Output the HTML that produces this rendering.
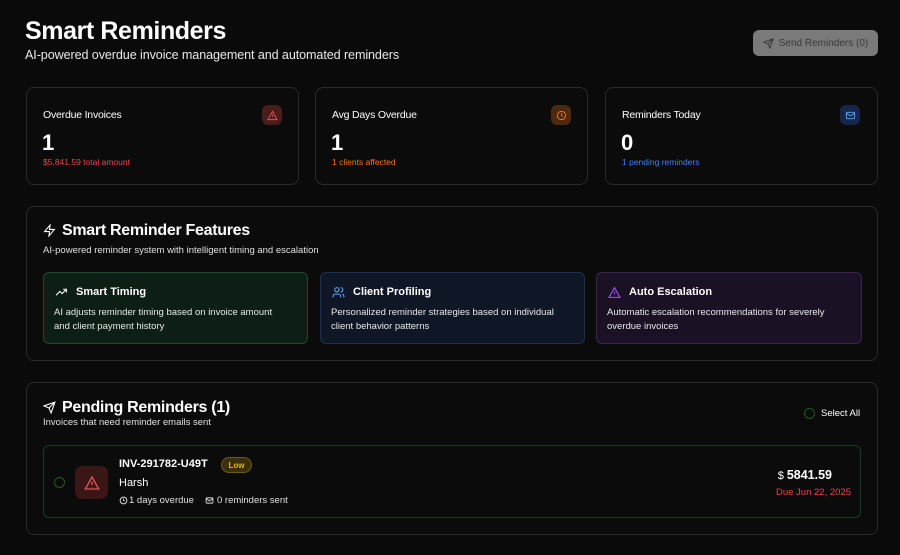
<!DOCTYPE html>
<html><head><meta charset="utf-8"><style>
*{box-sizing:border-box;margin:0;padding:0}
body{width:900px;height:555px;background:#0a0a0a;color:#fff;font-family:"Liberation Sans",sans-serif;position:relative;overflow:hidden}
.a{position:absolute}
.card{position:absolute;border:1px solid #2a2a2a;border-radius:8px;background:#0b0b0b}
.t{font-size:10.5px;letter-spacing:-0.2px}
svg{display:block}
</style></head><body>
<div class="a" style="left:25px;top:17px;font-size:25px;font-weight:bold;letter-spacing:-0.4px">Smart Reminders</div>
<div class="a" style="left:25px;top:48px;font-size:12.6px;color:#e8e8e8;letter-spacing:-0.1px">AI-powered overdue invoice management and automated reminders</div>
<div class="a" style="left:753px;top:30px;width:125px;height:26px;background:#7a7a7a;border-radius:6px;color:#3a3a3a;font-size:10px;display:flex;align-items:center;justify-content:center;gap:5px">
<svg width="11" height="11" viewBox="0 0 24 24" fill="none" stroke="#333" stroke-width="2"><path d="M22 2L11 13M22 2l-7 20-4-9-9-4z"/></svg>Send Reminders (0)</div>

<div class="card" style="left:26px;top:87px;width:273px;height:98px">
<div class="a t" style="left:16px;top:21px">Overdue Invoices</div>
<div class="a" style="left:235px;top:17px;width:20px;height:20px;border-radius:6px;background:#4a1c1c;display:flex;align-items:center;justify-content:center"><svg width="11" height="11" viewBox="0 0 24 24" fill="none" stroke="#e05555" stroke-width="2"><path d="M12 3L2 21h20z M12 10v5 M12 18v.5"/></svg></div>
<div class="a" style="left:15px;top:42px;font-size:22px;font-weight:bold">1</div>
<div class="a" style="left:16px;top:69px;font-size:8.5px;color:#ef4444">$5,841.59 total amount</div></div>

<div class="card" style="left:315px;top:87px;width:273px;height:98px">
<div class="a t" style="left:16px;top:21px">Avg Days Overdue</div>
<div class="a" style="left:235px;top:17px;width:20px;height:20px;border-radius:6px;background:#4a2a10;display:flex;align-items:center;justify-content:center"><svg width="11" height="11" viewBox="0 0 24 24" fill="none" stroke="#f97316" stroke-width="2"><circle cx="12" cy="12" r="9"/><path d="M12 7v5l3 2"/></svg></div>
<div class="a" style="left:15px;top:42px;font-size:22px;font-weight:bold">1</div>
<div class="a" style="left:16px;top:69px;font-size:8.5px;color:#f97316">1 clients affected</div></div>

<div class="card" style="left:605px;top:87px;width:273px;height:98px">
<div class="a t" style="left:16px;top:21px">Reminders Today</div>
<div class="a" style="left:234px;top:17px;width:20px;height:20px;border-radius:6px;background:#16264a;display:flex;align-items:center;justify-content:center"><svg width="11" height="11" viewBox="0 0 24 24" fill="none" stroke="#60a5fa" stroke-width="2"><rect x="3" y="5" width="18" height="14" rx="2"/><path d="M3 7l9 6 9-6"/></svg></div>
<div class="a" style="left:15px;top:42px;font-size:22px;font-weight:bold">0</div>
<div class="a" style="left:16px;top:69px;font-size:8.5px;color:#3b82f6">1 pending reminders</div></div>

<div class="card" style="left:26px;top:206px;width:852px;height:155px">
<svg class="a" style="left:16px;top:17px" width="13" height="13" viewBox="0 0 24 24" fill="none" stroke="#fff" stroke-width="2"><path d="M13 2L3 14h9l-1 8 10-12h-9z"/></svg>
<div class="a" style="left:35px;top:15px;font-size:16px;font-weight:bold;letter-spacing:-0.3px">Smart Reminder Features</div>
<div class="a" style="left:16px;top:38px;font-size:9.5px;color:#e0e0e0">AI-powered reminder system with intelligent timing and escalation</div>
<div class="a" style="left:16px;top:65px;width:265px;height:72px;border:1px solid #1d4a28;border-radius:6px;background:#0d1f14">
<svg class="a" style="left:11px;top:13px" width="13" height="13" viewBox="0 0 24 24" fill="none" stroke="#fff" stroke-width="2"><path d="M2 17l7-7 4 4 8-8M15 6h6v6"/></svg>
<div class="a" style="left:32px;top:13px;font-size:11px;font-weight:bold">Smart Timing</div>
<div class="a" style="left:10px;top:33px;font-size:9.5px;line-height:14px;color:#e8e8e8">AI adjusts reminder timing based on invoice amount<br>and client payment history</div></div>
<div class="a" style="left:293px;top:65px;width:265px;height:72px;border:1px solid #1e3050;border-radius:6px;background:#0f1726">
<svg class="a" style="left:11px;top:13px" width="13" height="13" viewBox="0 0 24 24" fill="none" stroke="#60a5fa" stroke-width="2"><circle cx="9" cy="7" r="4"/><path d="M2 21v-2a4 4 0 014-4h6a4 4 0 014 4v2M16 3a4 4 0 010 8M22 21v-2a4 4 0 00-3-4"/></svg>
<div class="a" style="left:32px;top:13px;font-size:11px;font-weight:bold">Client Profiling</div>
<div class="a" style="left:10px;top:33px;font-size:9.5px;line-height:14px;color:#e8e8e8">Personalized reminder strategies based on individual<br>client behavior patterns</div></div>
<div class="a" style="left:569px;top:65px;width:266px;height:72px;border:1px solid #3a2550;border-radius:6px;background:#1a1224">
<svg class="a" style="left:11px;top:13px" width="13" height="13" viewBox="0 0 24 24" fill="none" stroke="#a855f7" stroke-width="2"><path d="M12 3L2 21h20z M12 10v5 M12 18v.5"/></svg>
<div class="a" style="left:32px;top:13px;font-size:11px;font-weight:bold">Auto Escalation</div>
<div class="a" style="left:10px;top:33px;font-size:9.5px;line-height:14px;color:#e8e8e8">Automatic escalation recommendations for severely<br>overdue invoices</div></div>
</div>

<div class="card" style="left:26px;top:382px;width:852px;height:153px">
<svg class="a" style="left:16px;top:18px" width="13" height="13" viewBox="0 0 24 24" fill="none" stroke="#fff" stroke-width="2"><path d="M22 2L11 13M22 2l-7 20-4-9-9-4z"/></svg>
<div class="a" style="left:35px;top:16px;font-size:16px;font-weight:bold;letter-spacing:-0.3px">Pending Reminders (1)</div>
<div class="a" style="left:16px;top:34px;font-size:9.5px;color:#e0e0e0">Invoices that need reminder emails sent</div>
<div class="a" style="left:777px;top:25px;width:11px;height:11px;border:1px solid #1d5a2c;border-radius:50%"></div>
<div class="a" style="left:794px;top:25px;font-size:9.5px">Select All</div>
<div class="a" style="left:16px;top:62px;width:818px;height:73px;border:1px solid #1a3d22;border-radius:6px">
<div class="a" style="left:10px;top:31px;width:11px;height:11px;border:1px solid #1d5a2c;border-radius:50%"></div>
<div class="a" style="left:31px;top:20px;width:33px;height:33px;border-radius:7px;background:#3a1616;display:flex;align-items:center;justify-content:center"><svg width="16" height="16" viewBox="0 0 24 24" fill="none" stroke="#e05555" stroke-width="2"><path d="M12 3L2 21h20z M12 10v5 M12 18v.5"/></svg></div>
<div class="a" style="left:75px;top:12px;font-size:11px;font-weight:bold">INV-291782-U49T</div>
<div class="a" style="left:177px;top:11px;width:31px;height:16px;border:1px solid #6b5a10;background:#3a3008;border-radius:8px;color:#eab308;font-size:8px;font-weight:bold;display:flex;align-items:center;justify-content:center">Low</div>
<div class="a" style="left:75px;top:31px;font-size:11px">Harsh</div>
<svg class="a" style="left:75px;top:50px" width="9" height="9" viewBox="0 0 24 24" fill="none" stroke="#ddd" stroke-width="2.5"><circle cx="12" cy="12" r="9"/><path d="M12 7v5l3 2"/></svg>
<div class="a" style="left:85px;top:49px;font-size:9.5px;color:#e0e0e0">1 days overdue</div>
<svg class="a" style="left:161px;top:50px" width="9" height="9" viewBox="0 0 24 24" fill="none" stroke="#ddd" stroke-width="2.5"><rect x="3" y="5" width="18" height="14" rx="2"/><path d="M3 7l9 6 9-6"/></svg>
<div class="a" style="left:173px;top:49px;font-size:9.5px;color:#e0e0e0">0 reminders sent</div>
<div class="a" style="right:28px;top:22px;font-size:12.5px;font-weight:bold"><span style="font-weight:normal;font-size:11px;margin-right:3px">$</span>5841.59</div>
<div class="a" style="right:9px;top:41px;font-size:9.5px;color:#ef4444">Due Jun 22, 2025</div>
</div></div>
</body></html>
